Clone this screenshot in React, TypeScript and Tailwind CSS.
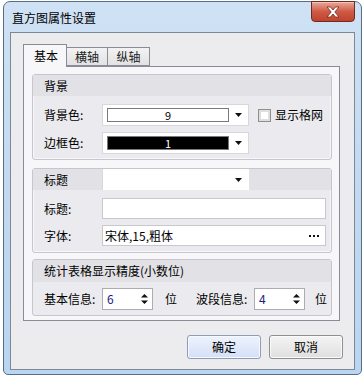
import React from "react";

const font = { fontFamily: '"Noto Sans CJK SC", "Noto Sans", sans-serif' };

const Arrow = () => (
  <svg width="7" height="4" viewBox="0 0 7 4" className="block">
    <path d="M0 0h7L3.5 4z" fill="#111" />
  </svg>
);

const Spin = ({ value }: { value: string }) => (
  <div className="flex h-[22px] w-[51px] items-center border border-[#abadb3] bg-white pl-[4px] pr-[4px] text-[12px] text-[#1a1a80]">
    <span className="flex-1 leading-none">{value}</span>
    <svg width="7" height="12" viewBox="0 0 7 12">
      <path d="M0 4.5L3.5 1 7 4.5z" fill="#111" />
      <path d="M0 7.5h7L3.5 11z" fill="#111" />
    </svg>
  </div>
);

const ColorBox = ({ dark, value }: { dark?: boolean; value: string }) => (
  <div className="flex h-[22px] w-[147px] items-center border border-[#d8d8dc] bg-white pl-[4px] pr-[6px]">
    <div
      className={
        "flex h-[14px] w-[122px] items-center justify-center border border-[#7a7a7a] text-[11px] leading-none " +
        (dark ? "bg-black text-white" : "bg-white text-black")
      }
    >
      {value}
    </div>
    <div className="flex flex-1 justify-end">
      <Arrow />
    </div>
  </div>
);

const Group = ({ title, children, head }: { title: string; children: React.ReactNode; head?: React.ReactNode }) => (
  <div className="rounded-[3px] border border-[#c6c6cc] bg-[#ebebef] shadow-[inset_0_0_0_1px_#f7f7f9]">
    <div className="flex h-[21px] items-center bg-[#e1e1e6] text-[12px]">
      <span className="w-[69px] pl-[11px]">{title}</span>
      {head}
    </div>
    {children}
  </div>
);

export default function App() {
  return (
    <div className="h-[376px] w-[364px] bg-white" style={font}>
      <div className="ml-[3px] mt-[1px] h-[374px] w-[359px] rounded-t-[7px] rounded-b-[5px] border border-[#596d83] bg-gradient-to-b from-[#cfe2f5] via-[#c2d9f0] to-[#b9d5f1] px-[6px] pb-[4px]">
        <div className="flex h-[30px] items-start justify-between">
          <span className="pl-[2px] pt-[10px] text-[12px] leading-none text-black">直方图属性设置</span>
          <div className="-mt-px flex h-[21px] w-[44px] items-center justify-center rounded-b-[4px] border border-[#6e2b22] bg-gradient-to-b from-[#e8a899] via-[#cf5a45] to-[#c0422d] shadow-[inset_0_1px_0_#f2c4b8]">
            <svg width="16" height="12" viewBox="0 0 16 12">
              <path d="M2 1h3.5L8 4l2.5-3H14L9.8 6 14 11h-3.5L8 8l-2.5 3H2l4.2-5z" fill="#fff" stroke="#6b2a20" strokeWidth="0.8" />
            </svg>
          </div>
        </div>
        <div className="h-[338px] border border-[#7d8897] bg-[#ececef] pl-[12px] pt-[11px]">
          <div className="flex h-[22px] items-end text-[12px]">
            <div className="relative z-10 -mb-px flex h-[23px] w-[44px] items-center justify-center border border-b-0 border-[#898c95] bg-[#f7f7f9] pl-[3px] pr-[1px]">
              基本
            </div>
            <div className="flex h-[19px] w-[41px] items-center justify-center border border-l-0 border-[#898c95] bg-gradient-to-b from-[#f2f2f2] to-[#e2e2e4] text-[#222]">
              横轴
            </div>
            <div className="flex h-[19px] w-[42px] items-center justify-center border border-l-0 border-[#898c95] bg-gradient-to-b from-[#f2f2f2] to-[#e2e2e4] text-[#222]">
              纵轴
            </div>
          </div>
          <div className="flex h-[255px] w-[317px] flex-col gap-[8px] border border-[#898c95] bg-[#f7f7f9] pl-[8px] pr-[7px] pt-[7px]">
            <Group title="背景">
              <div className="flex flex-col gap-[6px] pb-[5px] pt-[8px] text-[12px]">
                <div className="flex items-center">
                  <span className="w-[69px] pl-[11px]">背景色:</span>
                  <ColorBox value="9" />
                  <div className="ml-[9px] h-[13px] w-[13px] border border-[#8f8f8f] bg-white shadow-[inset_0_0_0_2px_#dedede]" />
                  <span className="ml-[4px]">显示格网</span>
                </div>
                <div className="flex items-center">
                  <span className="w-[69px] pl-[11px]">边框色:</span>
                  <ColorBox dark value="1" />
                </div>
              </div>
            </Group>
            <Group
              title="标题"
              head={
                <div className="flex h-[21px] w-[147px] items-center justify-end border-l border-[#d8d8dc] bg-white pr-[7px]">
                  <Arrow />
                </div>
              }
            >
              <div className="flex flex-col gap-[6px] pb-[6px] pt-[8px] text-[12px]">
                <div className="flex items-center">
                  <span className="w-[69px] pl-[11px]">标题:</span>
                  <div className="h-[21px] w-[224px] border border-[#c9c9cd] bg-white" />
                </div>
                <div className="flex items-center">
                  <span className="w-[69px] pl-[11px]">字体:</span>
                  <div className="flex h-[21px] w-[224px] items-center justify-between border border-[#c9c9cd] bg-white pl-[2px] pr-[6px]">
                    <span>宋体,15,粗体</span>
                    <div className="flex gap-[2px]">
                      <div className="h-[2px] w-[2px] bg-[#111]" />
                      <div className="h-[2px] w-[2px] bg-[#111]" />
                      <div className="h-[2px] w-[2px] bg-[#111]" />
                    </div>
                  </div>
                </div>
              </div>
            </Group>
            <div className="-mt-[2px] rounded-[3px] border border-[#c6c6cc] bg-[#ebebef]">
              <div className="flex h-[22px] items-center bg-[#e1e1e6] pl-[11px] text-[12px]">统计表格显示精度(小数位)</div>
              <div className="flex items-center pb-[5px] pt-[6px] text-[12px]">
                <span className="w-[69px] pl-[11px]">基本信息:</span>
                <Spin value="6" />
                <span className="ml-[12px]">位</span>
                <span className="ml-[19px] w-[58px]">波段信息:</span>
                <Spin value="4" />
                <span className="ml-[10px]">位</span>
              </div>
            </div>
          </div>
          <div className="flex gap-[8px] pl-[164px] pt-[14px] text-[12px]">
            <div className="flex h-[24px] w-[74px] items-center justify-center rounded-[3px] border border-[#8e9cb4] bg-gradient-to-b from-[#eef3fd] to-[#d4e0f8] shadow-[inset_0_0_0_1px_#f6f9ff]">
              确定
            </div>
            <div className="flex h-[24px] w-[74px] items-center justify-center rounded-[3px] border border-[#8e8f8f] bg-gradient-to-b from-[#f4f4f4] to-[#dfdfdf] shadow-[inset_0_0_0_1px_#fafafa]">
              取消
            </div>
          </div>
        </div>
      </div>
    </div>
  );
}
